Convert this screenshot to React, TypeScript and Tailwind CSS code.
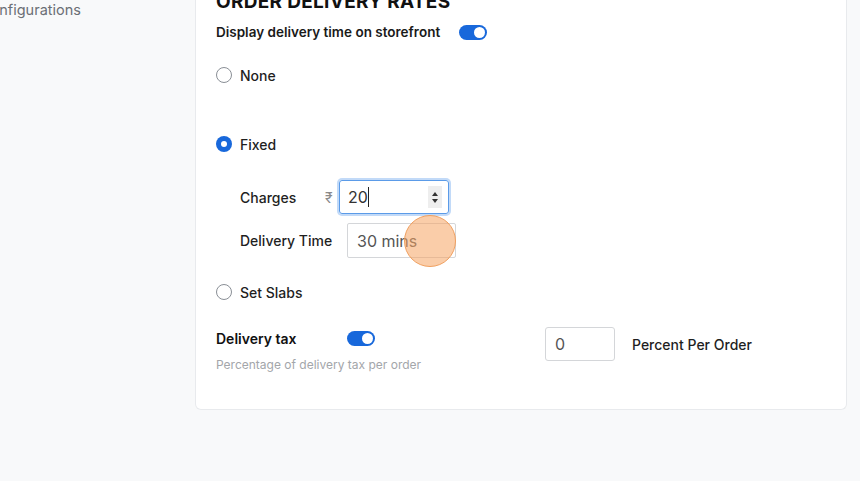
import React from 'react';

const Toggle: React.FC = () => (
  <div className="w-[28px] h-[15px] rounded-full bg-[#1868db] flex items-center justify-end px-[2px]">
    <div className="w-[11px] h-[11px] rounded-full bg-white" />
  </div>
);

const Radio: React.FC<{ label: string; checked?: boolean }> = ({ label, checked }) => (
  <div className="flex items-center gap-[8px] h-[20px]">
    {checked ? (
      <div className="w-[16px] h-[16px] rounded-full bg-[#1868db] flex items-center justify-center">
        <div className="w-[6px] h-[6px] rounded-full bg-white" />
      </div>
    ) : (
      <div className="w-[16px] h-[16px] rounded-full border border-[#8a8f96] bg-white" />
    )}
    <span className="text-[14px] text-[#1f1f1f] font-medium">{label}</span>
  </div>
);

const App: React.FC = () => {
  return (
    <div className="w-[860px] h-[481px] bg-[#f8f9fa] flex overflow-hidden relative" style={{ fontFamily: 'Inter, "Noto Sans", sans-serif' }}>
      {/* sidebar */}
      <div className="w-[195px] shrink-0 overflow-hidden">
        <div className="-ml-[20px] -mt-[1px] text-[14.5px] text-[#6b6f75] whitespace-nowrap">Configurations</div>
      </div>

      {/* settings card */}
      <div className="w-[652px] h-[410px] bg-white border border-[#e8eaed] border-t-0 rounded-b-[6px] pl-[20px] flex flex-col">
        <h2 className="-mt-[8px] text-[19px] leading-[20px] font-bold text-[#111] tracking-[0.3px]">ORDER DELIVERY RATES</h2>

        <div className="mt-[12px] flex items-center gap-[19px] h-[16px]">
          <span className="text-[13.5px] font-semibold text-[#1a1a1a]">Display delivery time on storefront</span>
          <Toggle />
        </div>

        <div className="mt-[25px]">
          <Radio label="None" />
        </div>

        <div className="mt-[49px]">
          <Radio label="Fixed" checked />
        </div>

        <div className="mt-[26px] pl-[24px] flex items-center h-[34px]">
          <span className="w-[85px] text-[14px] font-medium text-[#1f1f1f]">Charges</span>
          <span className="w-[14px] text-[14px] text-[#8a8a8a]">₹</span>
          <div className="w-[110px] h-[34px] border border-[#5b9be8] rounded-[3px] shadow-[0_0_0_2px_rgba(80,150,235,0.35)] flex items-center pl-[8px] pr-[6px]">
            <span className="text-[16px] text-[#333]">20</span>
            <span className="w-[1px] h-[20px] bg-[#222]" />
            <div className="ml-auto w-[14px] h-[22px] bg-[#eeeeee] flex flex-col items-center justify-center gap-[3px]">
              <div className="w-0 h-0 border-l-[3.5px] border-r-[3.5px] border-b-[4px] border-l-transparent border-r-transparent border-b-[#333]" />
              <div className="w-0 h-0 border-l-[3.5px] border-r-[3.5px] border-t-[4px] border-l-transparent border-r-transparent border-t-[#333]" />
            </div>
          </div>
        </div>

        <div className="mt-[9px] pl-[24px] flex items-center h-[35px]">
          <span className="w-[107px] text-[14px] font-medium text-[#1f1f1f]">Delivery Time</span>
          <div className="w-[109px] h-[35px] border border-[#d4d6d9] rounded-[2px] flex items-center pl-[9px]">
            <span className="text-[16px] text-[#555]">30 mins</span>
          </div>
        </div>

        <div className="mt-[24px]">
          <Radio label="Set Slabs" />
        </div>

        <div className="mt-[27px] flex">
          <div className="w-[329px] flex flex-col">
            <div className="flex items-center h-[18px]">
              <span className="w-[131px] text-[14px] font-semibold text-[#111]">Delivery tax</span>
              <Toggle />
            </div>
            <span className="mt-[9px] text-[12px] text-[#a3a6aa]">Percentage of delivery tax per order</span>
          </div>
          <div className="flex items-center gap-[17px] -mt-[2px] h-[34px]">
            <div className="w-[70px] h-[34px] border border-[#d4d6d9] rounded-[3px] flex items-center pl-[9px]">
              <span className="text-[16px] text-[#555]">0</span>
            </div>
            <span className="text-[14px] font-medium text-[#1f1f1f]">Percent Per Order</span>
          </div>
        </div>
      </div>

      {/* click indicator */}
      <div className="absolute left-[404px] top-[215px] w-[52px] h-[52px] rounded-full bg-[#f6a463]/55 border border-[#f0a060]" />
    </div>
  );
};

export default App;
